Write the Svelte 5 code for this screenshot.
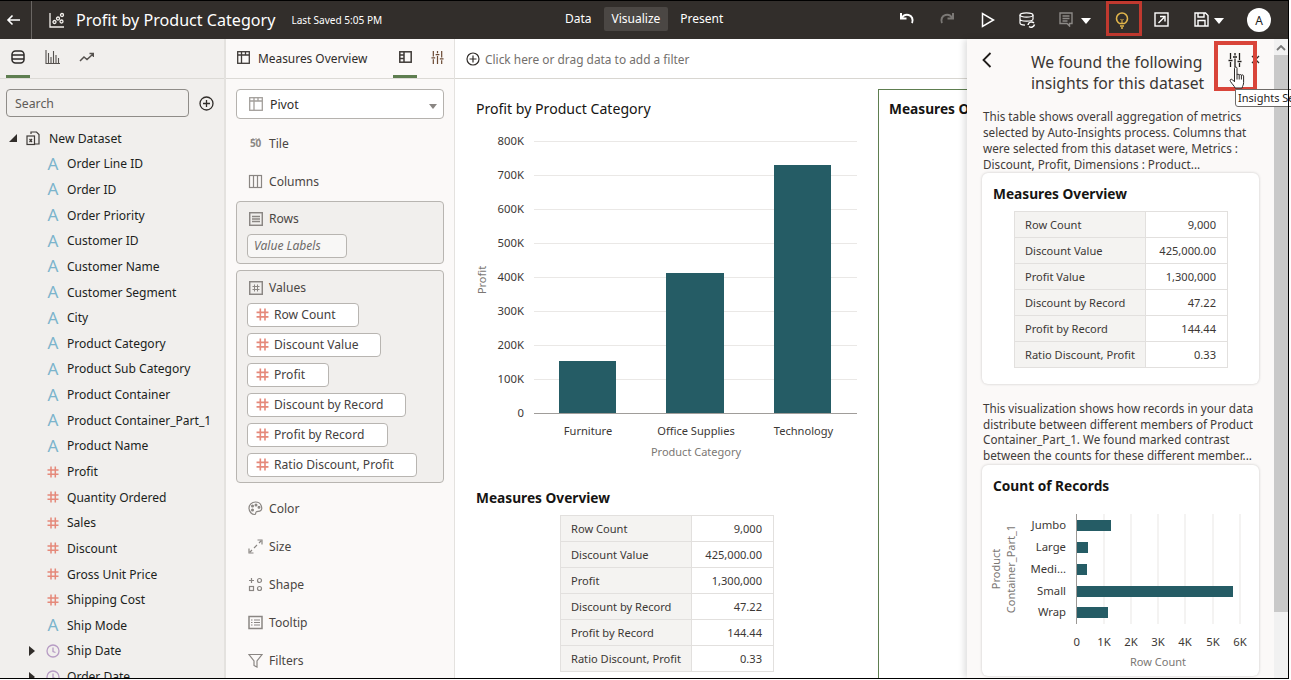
<script>
  const fields = [
    ['a','Order Line ID'],['a','Order ID'],['a','Order Priority'],['a','Customer ID'],['a','Customer Name'],
    ['a','Customer Segment'],['a','City'],['a','Product Category'],['a','Product Sub Category'],['a','Product Container'],
    ['a','Product Container_Part_1'],['a','Product Name'],['h','Profit'],['h','Quantity Ordered'],['h','Sales'],
    ['h','Discount'],['h','Gross Unit Price'],['h','Shipping Cost'],['a','Ship Mode'],['c','Ship Date'],['c','Order Date']
  ];
  const values = [['Row Count',112],['Discount Value',134],['Profit',82],['Discount by Record',159],['Profit by Record',141],['Ratio Discount, Profit',170]];
  const grid = [141,175,209,243,277,311,345,379];
  const labels = ['800K','700K','600K','500K','400K','300K','200K','100K'];
  const bars = [[559,57,361,'Furniture',588],[666,58,273,'Office Supplies',696],[774,57,165,'Technology',803.5]];
  const t1 = ['Row Count','Discount Value','Profit','Discount by Record','Profit by Record','Ratio Discount, Profit'];
  const t2 = ['Row Count','Discount Value','Profit Value','Discount by Record','Profit by Record','Ratio Discount, Profit'];
  const nums = ['9,000','425,000.00','1,300,000','47.22','144.44','0.33'];
  const hbars = [['Jumbo',521,34],['Large',543,11],['Medi...',565,10],['Small',587,156],['Wrap',608,31]];
  const xticks = [['0',1076.7],['1K',1104],['2K',1131],['3K',1158],['4K',1185],['5K',1213],['6K',1240]];
</script>

{#snippet hash(size = 12)}
  <svg class="ico" width={size} height={size} viewBox="0 0 12 12" fill="none" stroke="#e5897a" stroke-width="1.5"><path d="M4 .5v11M8.300 .5v11M.5 4h11M.5 8.200h11"/></svg>
{/snippet}

{#snippet mtable(rows)}
  <table class="mt"><tbody>
    {#each rows as r, i}<tr><th>{r}</th><td>{nums[i]}</td></tr>{/each}
  </tbody></table>
{/snippet}

{#snippet gicon(kind)}
  <svg class="gi" width="15" height="15" viewBox="0 0 15 15" fill="none" stroke="#8a8683" stroke-width="1.200">
    {#if kind === 'cols'}<rect x="1.500" y="1.500" width="12" height="12"/><path d="M5.500 1.500v12M9.500 1.500v12"/>
    {:else if kind === 'color'}<path d="M7.500 1C3.500 1 1 4 1 7.300c0 3.500 3 6.200 5.500 6.200 1.600 0 1-1.700 1.600-2.500.8-1 3.200-.2 4.700-1.500C14.500 8 14 1 7.500 1z"/><circle cx="4.500" cy="5" r=".9" fill="#8a8683"/><circle cx="8" cy="4" r=".9" fill="#8a8683"/><circle cx="11" cy="6.300" r=".9" fill="#8a8683"/><circle cx="4.500" cy="9" r=".9" fill="#8a8683"/>
    {:else if kind === 'size'}<path d="M9.500 1h4.500v4.500M1 9.500V14h4.500M13 2l-2 2M4 11l-2 2M9 6L6 9"/>
    {:else if kind === 'shape'}<path d="M3.500 1v5M1 3.500h5"/><circle cx="11.500" cy="3.500" r="2"/><rect x="1.500" y="9.500" width="4" height="4"/><circle cx="11.500" cy="11.500" r="2"/>
    {:else if kind === 'tip'}<rect x="1" y="1.500" width="13" height="12" stroke-width="1.500"/><path d="M3 5h1.500M6 5h6M3 7.500h1.500M6 7.500h6M3 10h1.500M6 10h6"/>
    {:else if kind === 'filter'}<path d="M1 1.500h13L9 8v6L6 12.500V8z"/>
    {/if}
  </svg>
{/snippet}

{#snippet tune(color, w)}
  <svg width={w} height={w} viewBox="0 0 14 14" fill="none" stroke={color} stroke-width="1.300"><path d="M2.500 0v6M2.500 9v5M7 0v2.500M7 5.500V14M11.500 0v7M11.500 10v4M.5 7.500h4M5 4h4M9.500 8.500h4"/></svg>
{/snippet}

<div class="app">
  <header class="top">
    <div class="back"><svg width="16" height="12" viewBox="0 0 16 12" fill="none" stroke="#fff" stroke-width="1.600"><path d="M14 6H2M6.500 1.500L2 6l4.500 4.500"/></svg></div>
    <svg class="vizi" width="16" height="16" viewBox="0 0 16 16" fill="none" stroke="#f3f0ec" stroke-width="1.300"><path d="M1 1v14h14"/><circle cx="5.500" cy="10" r="1.500"/><circle cx="9" cy="6.500" r="1.500"/><circle cx="13" cy="3" r="1.500"/><circle cx="12.500" cy="9.500" r="1.500"/></svg>
    <h1>Profit by Product Category</h1>
    <span class="saved">Last Saved 5:05 PM</span>
    <nav><span>Data</span><span class="on">Visualize</span><span>Present</span></nav>
    <div class="tools">
      <svg style="left:899px" width="16" height="14" viewBox="0 0 16 14" fill="none" stroke="#fff" stroke-width="2"><path d="M2 1v5.500h5.500M2.500 6.500C4 3.500 7 2.500 9.500 3c3.500.8 5 4.500 3.500 8"/></svg>
      <svg style="left:939px" width="16" height="14" viewBox="0 0 16 14" fill="none" stroke="#7b7875" stroke-width="2"><path d="M14 1v5.500H8.500M13.500 6.500C12 3.500 9 2.500 6.500 3 3 3.800 1.500 7.500 3 11"/></svg>
      <svg style="left:981px" width="14" height="16" viewBox="0 0 14 16" fill="none" stroke="#fff" stroke-width="1.500"><path d="M1.500 1.500v13L12.500 8z"/></svg>
      <svg style="left:1019px" width="17" height="17" viewBox="0 0 17 17" fill="none" stroke="#fff" stroke-width="1.200"><ellipse cx="7.500" cy="3" rx="6.500" ry="2.200"/><path d="M1 3v8c0 1.200 2.500 2 5 2.200M14 3v4M1 7c0 1.200 3 2.200 6.500 2.200S14 8.200 14 7"/><path d="M9 13a3.500 3.500 0 0 1 6-2M15.500 12.500a3.500 3.500 0 0 1-5.500 2" stroke-width="1.500"/></svg>
      <svg style="left:1059px" width="14" height="15" viewBox="0 0 14 15" fill="none" stroke="#8c8986" stroke-width="1.400"><path d="M1 1h12v10.500H10.500V14L8 11.500H1zM3.500 4h7M3.500 6.500h7M3.500 9h5"/></svg>
      <i class="caret" style="left:1081px"></i>
      <svg style="left:1115px" width="14" height="17" viewBox="0 0 14 17" fill="none" stroke="#e2b64b" stroke-width="1.500"><path d="M4.500 11.500C3 10.500 1.500 9 1.500 6.500a5.500 5.500 0 0 1 11 0c0 2.500-1.500 4-3 5zM5 14h4M6 16h2"/><path d="M5.500 7l1.500 1.500L8.500 7M7 8.500v3" stroke-width="1"/></svg>
      <svg style="left:1154px" width="15" height="15" viewBox="0 0 15 15" fill="none" stroke="#fff" stroke-width="1.400"><rect x="1" y="1" width="13" height="13"/><path d="M4.500 11L10 5.500M6 4.500h5v5"/></svg>
      <svg style="left:1194px" width="15" height="15" viewBox="0 0 15 15" fill="none" stroke="#fff" stroke-width="1.400"><path d="M1 1h10.500L14 3.500V14H1z"/><path d="M4 1v4h6V1M4 14V8.500h7V14"/></svg>
      <i class="caret" style="left:1214px"></i>
      <div class="avatar">A</div>
    </div>
    <div class="redbox"></div>
  </header>

  <div class="body">
    <aside class="left">
      <div class="tabs">
        <span class="tab active"><svg width="16" height="14" viewBox="0 0 16 14" fill="none" stroke="#2d2a28" stroke-width="1.500"><rect x="2" y="1" width="12" height="12" rx="3.500"/><path d="M2 5h12M2 9h12"/></svg></span>
        <span class="tab"><svg width="15" height="14" viewBox="0 0 15 14" fill="none" stroke="#55514e" stroke-width="1.100"><path d="M1 0v13.500h14M3.500 3v10M6 7v6M8.500 1v12M11 5v8M13.500 8v5"/></svg></span>
        <span class="tab"><svg width="15" height="10" viewBox="0 0 15 10" fill="none" stroke="#55514e" stroke-width="1.500"><path d="M1 9l4-4 3 2.500L14 2M10.500 1.500H14.500V5"/></svg></span>
      </div>
      <div class="searchrow">
        <div class="search">Search</div>
        <svg width="15" height="15" viewBox="0 0 15 15" fill="none" stroke="#312d2a" stroke-width="1.300"><circle cx="7.500" cy="7.500" r="6.500"/><path d="M7.500 4v7M4 7.500h7"/></svg>
      </div>
      <div class="ds">
        <i class="tri-open"></i>
        <svg width="14" height="15" viewBox="0 0 14 15" fill="none" stroke="#3f3b38" stroke-width="1.200"><path d="M5 3V1h5.500L13 3.500V13H9"/><rect x="1" y="5" width="7.500" height="8.500"/><path d="M3.500 8l2.500 3M6 8l-2.500 3"/></svg>
        <span>New Dataset</span>
      </div>
      <ul>
        {#each fields as [k, n]}
          <li>
            {#if k === 'c'}<i class="tri"></i>{/if}
            <span class="fi">
              {#if k === 'a'}<span class="ta">A</span>
              {:else if k === 'h'}{@render hash(12)}
              {:else}<svg width="14" height="14" viewBox="0 0 14 14" fill="none" stroke="#b79cc4" stroke-width="1.300"><circle cx="7" cy="7" r="6"/><path d="M7 3.500V7.500l2.500 1"/></svg>{/if}
            </span>
            <span class="fn">{n}</span>
          </li>
        {/each}
      </ul>
    </aside>

    <section class="mid">
      <div class="midhead">
        <svg width="13" height="13" viewBox="0 0 13 13" fill="none" stroke="#3f3b38" stroke-width="1.300"><rect x=".7" y=".7" width="11.600" height="11.600"/><path d="M.7 4h11.600M4.500 .7v11.600M8.500 .7V4"/></svg>
        <span class="mt-title">Measures Overview</span>
        <span class="mtab active"><svg width="13" height="12" viewBox="0 0 13 12" fill="none" stroke="#3f3b38" stroke-width="1.500"><rect x=".8" y=".8" width="11.400" height="10.400"/><path d="M5 .8v10.400M.8 4h4M.8 7.500h4"/></svg></span>
        <span class="mtab">{@render tune('#6b4a34', 13)}</span>
      </div>
      <div class="midbody">
        <div class="select">
          <svg width="14" height="14" viewBox="0 0 14 14" fill="none" stroke="#a39f9b" stroke-width="1.300"><rect x=".7" y=".7" width="12.600" height="12.600"/><path d="M.7 4h12.600M5 .7v12.600M9 .7V4"/></svg>
          <span>Pivot</span><i class="dd"></i>
        </div>
        <div class="grow first"><span class="fifty"><svg width="10" height="2" viewBox="0 0 10 2" fill="#8a8683"><circle cx="2" cy="1" r=".8"/><circle cx="5" cy="1" r=".8"/><circle cx="8" cy="1" r=".8"/></svg><b>50</b></span><span>Tile</span></div>
        <div class="grow">{@render gicon('cols')}<span>Columns</span></div>
        <div class="box rowsbox">
          <div class="bh"><svg width="14" height="14" viewBox="0 0 14 14" fill="none" stroke="#8a8683" stroke-width="1.300"><rect x=".7" y=".7" width="12.600" height="12.600" stroke-width="1.500"/><path d="M3 4.500h8M3 7h8M3 9.500h8"/></svg><span>Rows</span></div>
          <div class="pill ghost">Value Labels</div>
        </div>
        <div class="box">
          <div class="bh"><svg width="14" height="14" viewBox="0 0 14 14" fill="none" stroke="#8a8683" stroke-width="1.300"><rect x=".7" y=".7" width="12.600" height="12.600" stroke-width="1.500"/><path d="M5.500 3.500v7M8.500 3.500v7M3.500 5.500h7M3.500 8.500h7" stroke-width="1"/></svg><span>Values</span></div>
          {#each values as [v, w]}
            <div class="pill" style="width:{w}px">{@render hash(13)}<span>{v}</span></div>
          {/each}
        </div>
        <div class="grow after">{@render gicon('color')}<span>Color</span></div>
        <div class="grow">{@render gicon('size')}<span>Size</span></div>
        <div class="grow">{@render gicon('shape')}<span>Shape</span></div>
        <div class="grow">{@render gicon('tip')}<span>Tooltip</span></div>
        <div class="grow">{@render gicon('filter')}<span>Filters</span></div>
      </div>
    </section>

    <main class="canvas">
      <div class="filter">
        <svg width="14" height="14" viewBox="0 0 14 14" fill="none" stroke="#312d2a" stroke-width="1.200"><circle cx="7" cy="7" r="6"/><path d="M7 3.500v7M3.500 7h7"/></svg>
        <span>Click here or drag data to add a filter</span>
      </div>
      <div class="vizrow">
        <div class="viz1">
          <h2 class="vt">Profit by Product Category</h2>
          <svg class="chart" width="423" height="350" viewBox="455 120 423 350">
            {#each grid as y, i}
              <line x1="534" x2="857" y1={y + .5} y2={y + .5} stroke="#eae8e6" />
              <text x="524" y={y + 3.500} text-anchor="end" class="tk">{labels[i]}</text>
            {/each}
            <text x="524" y="417" text-anchor="end" class="tk">0</text>
            <line x1="534" x2="857" y1="413.500" y2="413.500" stroke="#a09d9a"/>
            {#each bars as [x, w, y, n, c]}
              <rect x={x} y={y} width={w} height={413 - y} fill="#255c65"/>
              <text x={c} y="435" text-anchor="middle" class="tk cat">{n}</text>
            {/each}
            <text x="696" y="456" text-anchor="middle" class="axt">Product Category</text>
            <text transform="translate(486 280) rotate(-90)" text-anchor="middle" class="axt">Profit</text>
          </svg>
          <h2 class="vt b">Measures Overview</h2>
          <div class="t1">{@render mtable(t1)}</div>
        </div>
        <div class="viz2"><h2 class="vt b">Measures Overview</h2></div>
      </div>

      <div class="panel">
        <div class="pcontent">
          <div class="phead">
            <svg class="chev" width="10" height="16" viewBox="0 0 10 16" fill="none" stroke="#1f1c1a" stroke-width="1.800"><path d="M8.500 1L1.500 8l7 7"/></svg>
            <h3>We found the following insights for this dataset</h3>
            <span class="ptune">{@render tune('#1f1c1a', 14)}</span>
            <svg class="px" width="9" height="9" viewBox="0 0 9 9" fill="none" stroke="#312d2a" stroke-width="1.300"><path d="M1 1l7 7M8 1L1 8"/></svg>
          </div>
          <p>This table shows overall aggregation of metrics selected by Auto-Insights process. Columns that were selected from this dataset were, Metrics : Discount, Profit, Dimensions : Product...</p>
          <div class="card c1">
            <h4>Measures Overview</h4>
            <div class="t2">{@render mtable(t2)}</div>
          </div>
          <p class="p2">This visualization shows how records in your data distribute between different members of Product Container_Part_1. We found marked contrast between the counts for these different member...</p>
          <div class="card c2">
            <h4>Count of Records</h4>
            <svg class="chart2" width="277" height="170" viewBox="982 507 277 170">
              {#each xticks as [t, x], i}
                {#if i > 0}<line x1={x} x2={x} y1="515" y2="625" stroke="#e9e7e5"/>{/if}
                <text x={x} y="647" text-anchor="middle" class="tk">{t}</text>
              {/each}
              <line x1="1076.500" x2="1076.500" y1="515" y2="625" stroke="#9b9895"/>
              {#each hbars as [n, y, w]}
                <rect x="1077" y={y} width={w} height="11" fill="#255c65"/>
                <text x="1066" y={y + 8.500} text-anchor="end" class="tk">{n}</text>
              {/each}
              <text x="1158" y="667" text-anchor="middle" class="axt">Row Count</text>
              <text transform="translate(1000 570) rotate(-90)" text-anchor="middle" class="axt">Product</text>
              <text transform="translate(1015 570) rotate(-90)" text-anchor="middle" class="axt">Container_Part_1</text>
            </svg>
          </div>
        </div>
        <div class="scroll">
          <svg width="10" height="6" viewBox="0 0 10 6" fill="none" stroke="#777" stroke-width="1.800"><path d="M1 5l4-4 4 4"/></svg>
          <div class="thumb"></div>
        </div>
        <div class="redbox2"></div>
        <svg class="hand" width="17" height="24" viewBox="0 0 17 24" fill="#fff" stroke="#2a2725" stroke-width="1"><path d="M5.500 2.200c0-1.600 2.500-1.600 2.500 0V9c0-1 2.200-1 2.200.2 0-1 2.200-1 2.200.3 0-1 2.200-.8 2.200.6v6.400c0 2.500-1 3-1.500 5.500H6c-.5-2-3-4-4.500-6.500-1-1.800.5-3 2-1.700l2 2z"/><path d="M8 9v4.500M10.200 9.200v4.300M12.400 9.500v4" fill="none"/></svg>
      </div>
      <div class="tooltip">Insights Settings</div>
    </main>
  </div>
</div>

<style>
  :global(body) { margin: 0; background: #fff; overflow: hidden; }
  * { box-sizing: border-box; }
  .app { position: relative; width: 1288px; height: 679px; border-top: 1px solid #000; border-bottom: 1px solid #000; display: flex; flex-direction: column; font-family: "Noto Sans", sans-serif; font-size: 12px; color: #2f2c2a; overflow: visible; }
  .app::after { content: ""; position: absolute; top: -1px; bottom: -1px; right: -1px; width: 1px; background: #000; z-index: 9; }
  .top { position: relative; height: 38px; flex: none; background: #322e2b; color: #fff; display: flex; align-items: center; }
  .back { width: 32px; height: 38px; border-right: 1px solid #6a6663; display: flex; align-items: center; padding-left: 6px; flex: none; }
  .vizi { margin-left: 17px; flex: none; }
  h1 { margin: 0 0 0 11px; font-size: 16.100px; font-weight: 400; white-space: nowrap; }
  .saved { margin-left: 16px; font-size: 10.100px; white-space: nowrap; }
  nav { position: absolute; left: 553px; top: 6px; display: flex; font-size: 12px; }
  nav span { height: 24px; line-height: 24px; padding: 0 12px; border-radius: 2px; }
  nav .on { background: #4b4744; padding: 0 8px; margin: 0; }
  .tools svg, .tools i, .avatar { position: absolute; top: 11px; }
  .caret { width: 0; height: 0; border-left: 5.500px solid transparent; border-right: 5.500px solid transparent; border-top: 6px solid #fff; top: 17px !important; }
  .avatar { left: 1247px; top: 7px !important; width: 24px; height: 24px; border-radius: 50%; background: #fff; color: #222; font-size: 12px; display: flex; align-items: center; justify-content: center; }
  .redbox { position: absolute; left: 1106px; top: 0; width: 36px; height: 35px; border: 3px solid #c0392f; }

  .body { position: relative; flex: 1; display: flex; min-height: 0; }
  .left { width: 226px; flex: none; background: #f1efed; border-right: 2px solid #e4e2df; overflow: hidden; }
  .tabs { height: 40px; display: flex; padding-left: 6px; border-bottom: 1px solid #dcdad6; }
  .tab { width: 24px; margin-right: 10px; height: 39px; display: flex; align-items: center; justify-content: center; border-bottom: 3px solid transparent; }
  .tab.active { border-bottom-color: #5e7e50; }
  .searchrow { display: flex; align-items: center; padding: 10px 0 0 6px; gap: 10px; }
  .search { width: 183px; height: 28px; border: 1px solid #8f8c88; border-radius: 4px; line-height: 27px; padding-left: 8px; color: #5f5b58; font-size: 12.300px; }
  .ds { display: flex; align-items: center; height: 26px; margin-top: 8px; padding-left: 9px; font-size: 12.200px; color: #201e1c; }
  .ds svg { margin: 0 9px 0 9px; }
  .tri-open { width: 0; height: 0; border-left: 8px solid transparent; border-bottom: 8px solid #312d2a; }
  ul { list-style: none; margin: 0; padding: 0; }
  li { position: relative; height: 25.650px; display: flex; align-items: center; padding-left: 46px; font-size: 12.050px; white-space: nowrap; color: #201e1c; }
  .fi { width: 14px; height: 16px; display: flex; align-items: center; justify-content: center; margin-right: 7px; }
  .ta { color: #7cb4cc; font-size: 17px; line-height: 16px; font-weight: 400; }
  .ico { flex: none; }
  .tri { position: absolute; left: 29px; top: 8px; width: 0; height: 0; border-top: 5.500px solid transparent; border-bottom: 5.500px solid transparent; border-left: 6px solid #312d2a; }

  .mid { width: 229px; flex: none; background: #fbf9f8; border-right: 1px solid #e4e2df; overflow: hidden; }
  .midhead { height: 40px; display: flex; align-items: center; padding-left: 11px; border-bottom: 1px solid #dcdad6; }
  .mt-title { flex: none; margin: 0 0 2px 8px; width: 135px; font-size: 11.900px; white-space: nowrap; }
  .midhead > svg { flex: none; margin-bottom: 2px; }
  .mtab { flex: none; width: 24px; height: 39px; display: flex; align-items: center; justify-content: center; margin-right: 8px; border-bottom: 3px solid transparent; }
  .mtab.active { border-bottom-color: #5e7e50; }
  .midbody { padding: 10px 10px 0; }
  .select { height: 30px; width: 208px; background: #fff; border: 1px solid #b5b2ae; border-radius: 4px; display: flex; align-items: center; padding-left: 12px; position: relative; }
  .select span { margin-left: 7px; font-size: 12.300px; }
  .dd { position: absolute; right: 6px; top: 14px; width: 0; height: 0; border-left: 4.500px solid transparent; border-right: 4.500px solid transparent; border-top: 5px solid #8a8683; }
  .grow { height: 38px; display: flex; align-items: center; padding-left: 12px; font-size: 12.100px; color: #4a4643; }
  .grow > span:last-child { margin-left: 6px; }
  .grow.first { margin-top: 5px; }
  .grow.after { margin-top: 3px; }
  .fifty { width: 15px; display: flex; flex-direction: column; align-items: center; }
  .fifty svg { display: block; margin-bottom: -1px; }
  .fifty b { font-size: 10px; font-weight: 700; color: #8a8683; line-height: 9px; letter-spacing: -.3px; }
  .box { width: 208px; background: #f1efed; border: 1px solid #b8b5b1; border-radius: 4px; padding: 0 10px 5px; margin-bottom: 6px; }
  .rowsbox { margin-top: 1px; height: 63px; }
  .bh { height: 32px; display: flex; align-items: center; padding-left: 2px; font-size: 12.100px; color: #4a4643; padding-top: 1px; }
  .bh span { margin-left: 6px; }
  .pill { height: 24px; background: #fff; border: 1px solid #b8b5b1; border-radius: 4px; display: flex; align-items: center; padding: 0 0 1px 8px; margin-bottom: 6px; font-size: 12.100px; white-space: nowrap; color: #45413e; }
  .pill span { margin-left: 5px; }
  .pill:last-child { margin-bottom: 0; }
  .ghost { width: 100px; background: #f8f7f6; font-style: italic; color: #6f6b68; padding-left: 6px; }

  .canvas { flex: 1; position: relative; background: #fff; min-width: 0; display: flex; flex-direction: column; }
  .filter { height: 40px; flex: none; border-bottom: 1px solid #d8d6d1; display: flex; align-items: center; padding: 1px 0 0 11px; color: #736f6c; font-size: 11.900px; }
  .filter span { margin-left: 5px; }
  .vizrow { flex: 1; display: flex; min-height: 0; overflow: hidden; }
  .viz1 { width: 423px; flex: none; padding: 20px 0 0; }
  .vt { margin: 0; padding-left: 21px; font-size: 14.100px; font-weight: 400; line-height: 20px; color: #161513; }
  .vt.b { font-weight: 700; font-size: 13.700px; }
  .chart { display: block; margin: 1px 0 18px; }
  .tk { font-family: "Noto Sans", sans-serif; font-size: 11.300px; fill: #3c3835; }
  .cat { font-size: 11.100px; }
  .axt { font-family: "Noto Sans", sans-serif; font-size: 11px; fill: #7b7774; }
  .t1 { margin: 7px 0 0 105px; }
  .mt { border-collapse: collapse; font-size: 11.100px; width: 214px; table-layout: fixed; }
  .mt tr { height: 26px; }
  .mt th, .mt td { border: 1px solid #e2e0de; padding: 0; height: 26px; white-space: nowrap; }
  .mt th { width: 131px; background: #f4f3f1; font-weight: 400; text-align: left; padding-left: 10px; color: #3c3835; }
  .mt td { text-align: right; padding-right: 11px; color: #3c3835; }
  .viz2 { flex: 1; margin-top: 10px; border-left: 1px solid #5e7e50; border-top: 1px solid #5e7e50; padding-top: 9px; }
  .viz2 .vt { padding-left: 10px; }

  .panel { position: absolute; left: 512px; top: 0; bottom: 0; width: 321px; background: #fbf9f8; box-shadow: -3px 0 6px rgba(0,0,0,.12); display: flex; }
  .pcontent { width: 307px; flex: none; overflow: hidden; padding: 0 16px; position: relative; }
  .phead { height: 61px; position: relative; }
  .chev { position: absolute; left: -1px; top: 13px; }
  .phead h3 { position: absolute; left: 48px; top: 13px; width: 185px; margin: 0; font-size: 15.700px; line-height: 21px; font-weight: 400; color: #3a3633; white-space: normal; }
  .ptune { position: absolute; left: 245px; top: 14px; }
  .px { position: absolute; left: 268px; top: 16px; }
  p { margin: 8px 0 0; width: 285px; font-size: 11.700px; line-height: 16px; color: #3f3b38; }
  .card { width: 277px; margin-left: -1px; background: #fff; border-radius: 6px; box-shadow: 0 0 3px rgba(0,0,0,.2); }
  .c1 { margin-top: 1px; height: 211px; }
  .c2 { height: 211px; margin-top: 2px; }
  .card h4 { margin: 0; padding: 11px 0 0 11px; font-size: 13.700px; line-height: 20px; font-weight: 700; color: #161513; }
  .t2 { margin: 7px 0 0 32px; }
  p.p2 { margin-top: 17px; line-height: 15.500px; }
  .chart2 { display: block; margin-top: 10px; position: relative; }
  .scroll { width: 14px; flex: none; background: #f1f1f1; display: flex; flex-direction: column; align-items: center; }
  .scroll svg { margin: 6px 0 4px; flex: none; }
  .thumb { width: 100%; height: 557px; background: #c9c9c9; }
  .redbox2 { position: absolute; left: 247px; top: 2px; width: 43px; height: 50px; border: 4px solid #d9453a; }
  .hand { position: absolute; left: 262px; top: 27px; }
  .tooltip { position: absolute; left: 780px; top: 50px; width: 80px; height: 18px; background: #fff; border: 1px solid #6e6b68; border-radius: 0 0 0 3px; font-size: 11px; line-height: 15px; padding-left: 2px; white-space: nowrap; overflow: hidden; color: #1f1c1a; z-index: 5; }
</style>
